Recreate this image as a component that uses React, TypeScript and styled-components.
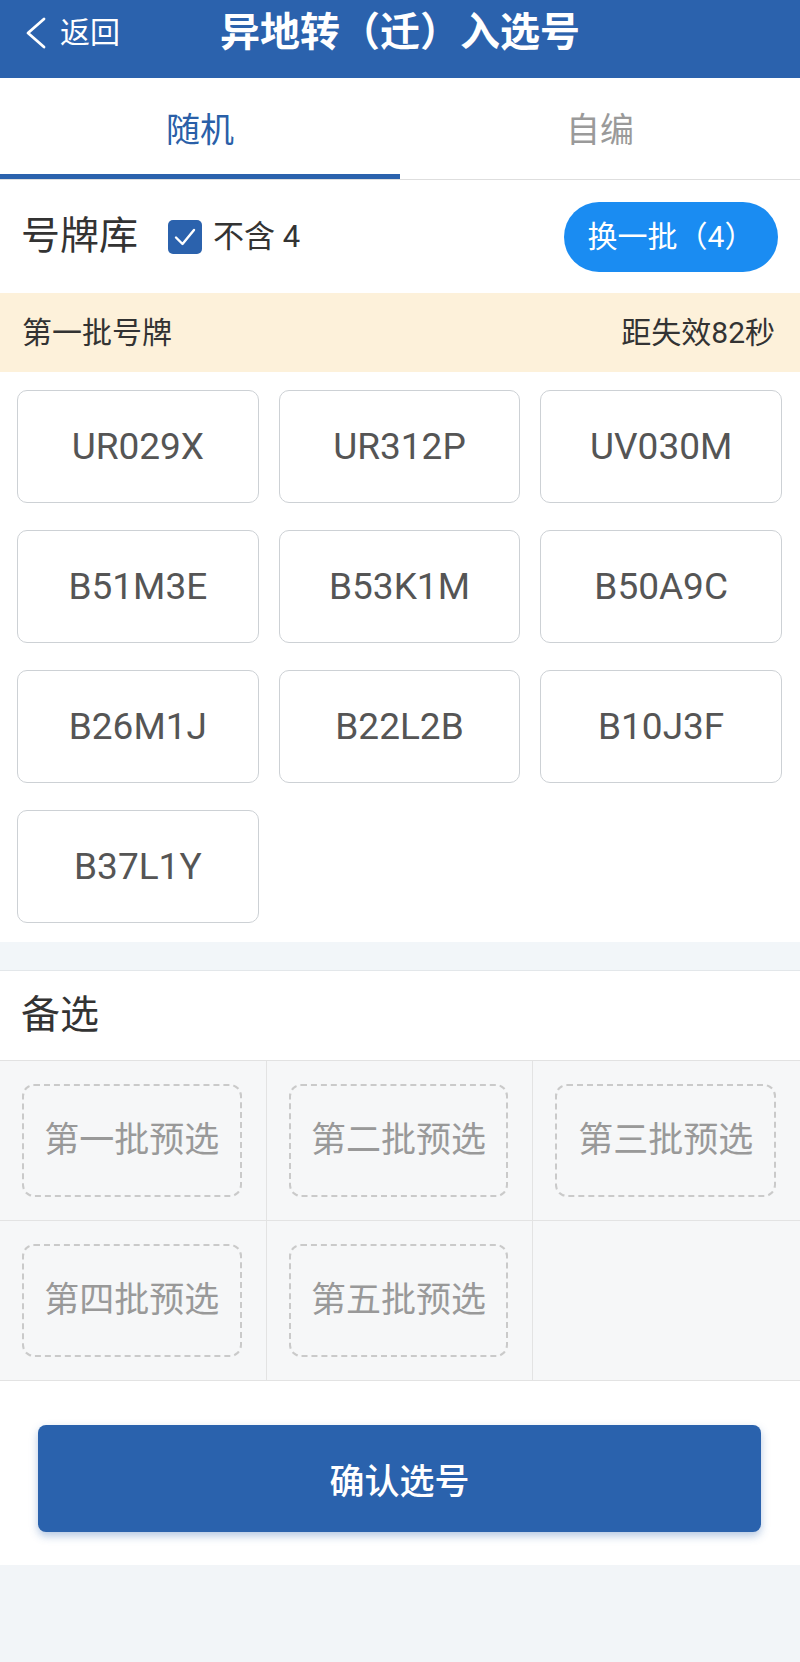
import React from 'react';
import styled, { createGlobalStyle } from 'styled-components';

const GlobalStyle = createGlobalStyle`
  html, body {
    margin: 0;
    padding: 0;
    background: #f2f5f8;
  }
  body {
    font-family: Roboto, "Noto Sans CJK SC", "Noto Sans", sans-serif;
    -webkit-font-smoothing: antialiased;
  }
  * { box-sizing: border-box; }
`;

const Page = styled.div`
  width: 800px;
  display: flex;
  flex-direction: column;
`;

const Header = styled.header`
  height: 78px;
  background: #2b62ad;
  display: grid;
  grid-template-columns: 1fr auto 1fr;
  align-items: center;
  padding-bottom: 12px;
  color: #fff;
`;

const Back = styled.div`
  display: flex;
  align-items: center;
  gap: 13px;
  padding-left: 24px;
  font-size: 30px;
  line-height: 1;
`;

const Title = styled.h1`
  margin: 0;
  font-size: 40px;
  font-weight: 700;
  line-height: 1;
`;

const TabBar = styled.nav`
  display: grid;
  grid-template-columns: 1fr 1fr;
  background: #fff;
  border-bottom: 1px solid #dedede;
`;

const Tab = styled.div<{ $active?: boolean }>`
  height: 101px;
  padding-top: 8px;
  display: flex;
  align-items: center;
  justify-content: center;
  font-size: 34px;
  line-height: 1;
  color: ${(p) => (p.$active ? '#2a5fa8' : '#9a9a9a')};
  border-bottom: 5px solid ${(p) => (p.$active ? '#2b62ad' : 'transparent')};
`;

const LibRow = styled.div`
  height: 113px;
  background: #fff;
  display: flex;
  align-items: center;
  padding: 0 22px 0 21px;
`;

const SectionTitle = styled.span`
  font-size: 39px;
  color: #333;
  line-height: 1;
`;

const CheckWrap = styled.label`
  display: flex;
  align-items: center;
  gap: 11px;
  margin-left: 30px;
`;

const CheckBox = styled.span`
  width: 34px;
  height: 34px;
  border-radius: 5px;
  background: #2b62ad;
  display: inline-flex;
  align-items: center;
  justify-content: center;
`;

const CheckLabel = styled.span`
  font-size: 31px;
  color: #333;
  line-height: 1;
`;

const RefreshButton = styled.button`
  margin-left: auto;
  width: 214px;
  height: 70px;
  border-radius: 35px;
  border: none;
  background: #1a8cf2;
  color: #fff;
  font-family: inherit;
  font-size: 30px;
  line-height: 1;
  padding: 0;
`;

const BatchBar = styled.div`
  height: 79px;
  background: #fdf1da;
  display: flex;
  align-items: center;
  justify-content: space-between;
  padding: 0 25px 0 22px;
  font-size: 30px;
  color: #333;
  line-height: 1;
`;

const PlateGrid = styled.div`
  background: #fff;
  display: grid;
  grid-template-columns: repeat(3, 1fr);
  column-gap: 20px;
  row-gap: 27px;
  padding: 18px 18px 19px 17px;
`;

const Plate = styled.div`
  height: 113px;
  border: 1.5px solid #cdd1d5;
  border-radius: 10px;
  background: #fff;
  display: flex;
  align-items: center;
  justify-content: center;
  font-size: 37px;
  color: #555;
  line-height: 1;
`;

const Band = styled.div`
  height: 29px;
  background: #f2f6f9;
  border-bottom: 1px solid #e3e7ea;
`;

const ReserveHeader = styled.div`
  height: 90px;
  background: #fff;
  display: flex;
  align-items: center;
  padding-left: 21px;
  border-bottom: 1px solid #e2e2e2;
`;

const ReserveGrid = styled.div`
  display: grid;
  grid-template-columns: repeat(3, 1fr);
  background: #f6f7f8;
`;

const ReserveCell = styled.div<{ $last?: boolean }>`
  height: 160px;
  padding: 23px 24px 23px 22px;
  border-bottom: 1px solid #e3e3e3;
  border-right: ${(p) => (p.$last ? 'none' : '1px solid #e3e3e3')};
`;

const Slot = styled.div`
  height: 100%;
  border: 2px dashed #cacaca;
  border-radius: 12px;
  display: flex;
  align-items: center;
  justify-content: center;
  font-size: 35px;
  color: #999;
  line-height: 1;
`;

const Footer = styled.div`
  background: #fff;
  padding: 44px 39px 33px 38px;
`;

const ConfirmButton = styled.button`
  width: 100%;
  height: 107px;
  border: none;
  border-radius: 8px;
  background: #2a62ad;
  color: #fff;
  font-family: inherit;
  font-size: 35px;
  font-weight: 500;
  box-shadow: 0 4px 8px rgba(42, 98, 173, 0.35);
`;

const plates = [
  'UR029X', 'UR312P', 'UV030M',
  'B51M3E', 'B53K1M', 'B50A9C',
  'B26M1J', 'B22L2B', 'B10J3F',
  'B37L1Y',
];

const reserves = ['第一批预选', '第二批预选', '第三批预选', '第四批预选', '第五批预选', ''];

export default function App() {
  return (
    <>
      <GlobalStyle />
      <Page>
        <Header>
          <Back>
            <svg width="23" height="32" viewBox="0 0 23 32" fill="none">
              <polyline points="20,2 4,16 20,30" stroke="#fff" strokeWidth="2.8" strokeLinecap="round" strokeLinejoin="round" />
            </svg>
            <span>返回</span>
          </Back>
          <Title>异地转（迁）入选号</Title>
          <div />
        </Header>

        <TabBar>
          <Tab $active>随机</Tab>
          <Tab>自编</Tab>
        </TabBar>

        <LibRow>
          <SectionTitle>号牌库</SectionTitle>
          <CheckWrap>
            <CheckBox>
              <svg width="26" height="26" viewBox="0 0 26 26" fill="none">
                <path d="M4 13.5 L10.5 20 L22 6" stroke="#fff" strokeWidth="2.4" strokeLinecap="round" strokeLinejoin="round" />
              </svg>
            </CheckBox>
            <CheckLabel>不含 4</CheckLabel>
          </CheckWrap>
          <RefreshButton>换一批（4）</RefreshButton>
        </LibRow>

        <BatchBar>
          <span>第一批号牌</span>
          <span>距失效82秒</span>
        </BatchBar>

        <PlateGrid>
          {plates.map((p) => (
            <Plate key={p}>{p}</Plate>
          ))}
        </PlateGrid>

        <Band />

        <ReserveHeader>
          <SectionTitle>备选</SectionTitle>
        </ReserveHeader>

        <ReserveGrid>
          {reserves.map((r, i) => (
            <ReserveCell key={i} $last={i % 3 === 2}>
              {r && <Slot>{r}</Slot>}
            </ReserveCell>
          ))}
        </ReserveGrid>

        <Footer>
          <ConfirmButton>确认选号</ConfirmButton>
        </Footer>
      </Page>
    </>
  );
}
